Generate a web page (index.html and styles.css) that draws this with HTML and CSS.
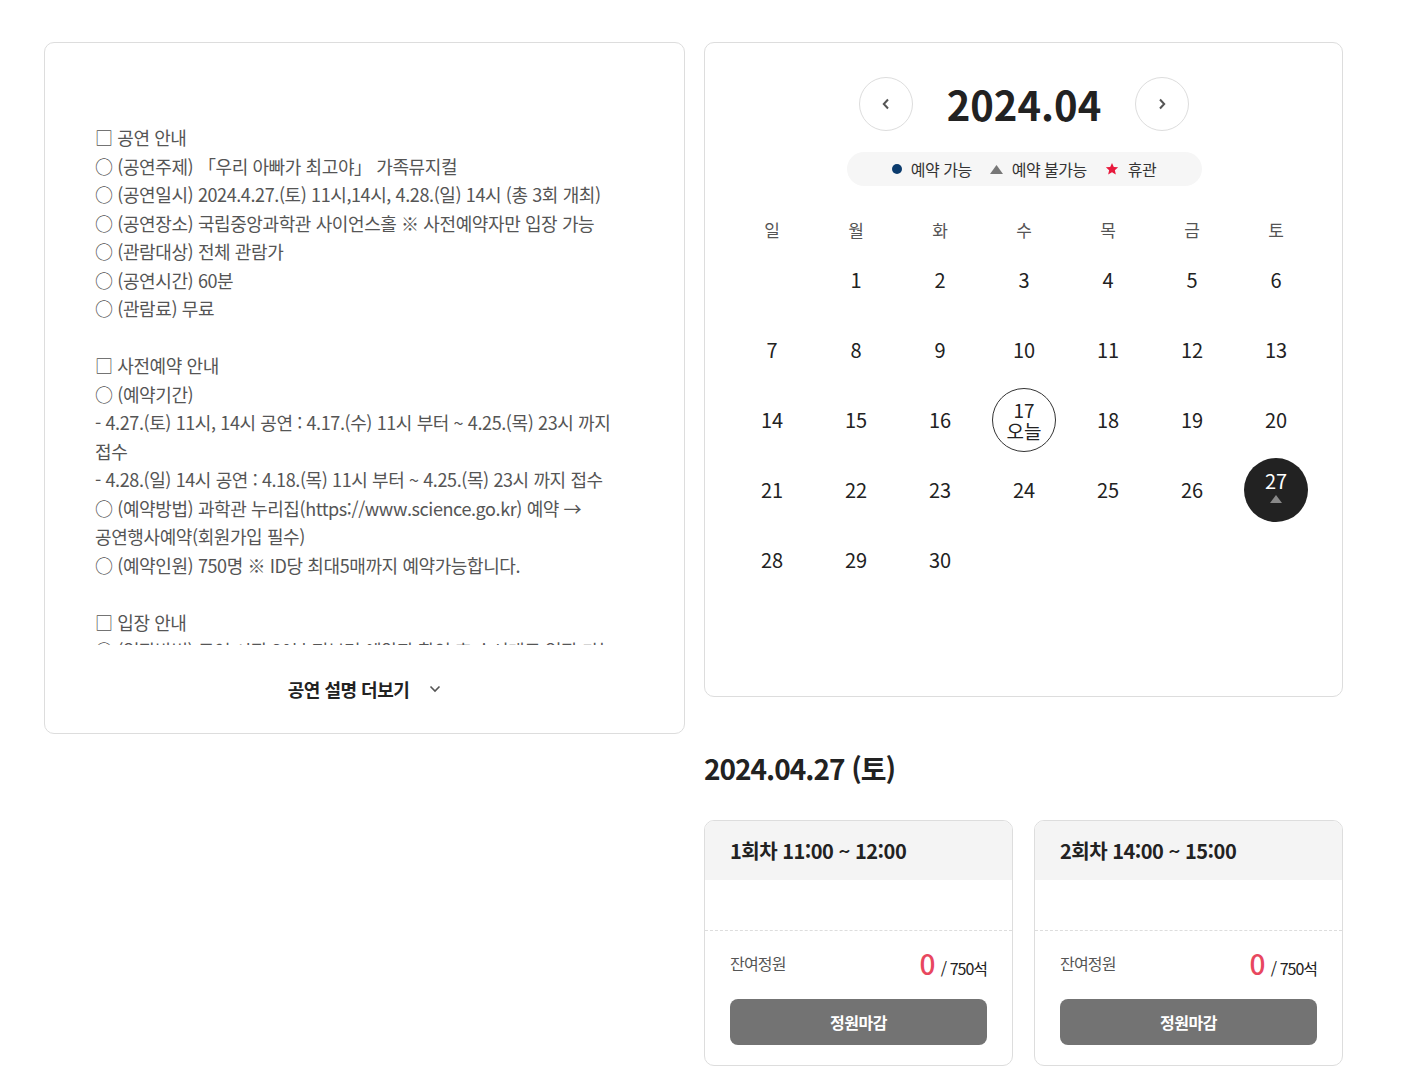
FILE: index.html
```html
<!DOCTYPE html>
<html lang="ko">
<head>
<meta charset="utf-8">
<title>공연 예약</title>
<link rel="stylesheet" href="styles.css">
</head>
<body>
<div class="page">
  <div class="left-col">
    <div class="info-card">
      <div class="desc">
        <p>□ 공연 안내<br>
        ○ (공연주제) 「우리 아빠가 최고야」 가족뮤지컬<br>
        ○ (공연일시) 2024.4.27.(토) 11시,14시, 4.28.(일) 14시 (총 3회 개최)<br>
        ○ (공연장소) 국립중앙과학관 사이언스홀 ※ 사전예약자만 입장 가능<br>
        ○ (관람대상) 전체 관람가<br>
        ○ (공연시간) 60분<br>
        ○ (관람료) 무료</p>
        <p>□ 사전예약 안내<br>
        ○ (예약기간)<br>
        - 4.27.(토) 11시, 14시 공연 : 4.17.(수) 11시 부터 ~ 4.25.(목) 23시 까지 접수<br>
        - 4.28.(일) 14시 공연 : 4.18.(목) 11시 부터 ~ 4.25.(목) 23시 까지 접수<br>
        ○ (예약방법) 과학관 누리집(https://www.science.go.kr) 예약 → 공연행사예약(회원가입 필수)<br>
        ○ (예약인원) 750명 ※ ID당 최대5매까지 예약가능합니다.</p>
        <p>□ 입장 안내<br>
        ○ (입장방법) 공연 시작 30분 전부터 예약자 확인 후 순서대로 입장 가능</p>
      </div>
      <button class="more-btn">공연 설명 더보기
        <svg width="12" height="8" viewBox="0 0 12 8"><path d="M1.5 1.5 6 6l4.5-4.5" fill="none" stroke="#555" stroke-width="1.6"/></svg>
      </button>
    </div>
  </div>

  <div class="right-col">
    <div class="cal-card">
      <div class="cal-head">
        <button class="nav-btn"><svg width="8" height="12" viewBox="0 0 8 12"><path d="M6 1.5 1.8 6 6 10.5" fill="none" stroke="#555" stroke-width="2"/></svg></button>
        <h2 class="cal-title">2024.04</h2>
        <button class="nav-btn"><svg width="8" height="12" viewBox="0 0 8 12"><path d="M2 1.5 6.2 6 2 10.5" fill="none" stroke="#555" stroke-width="2"/></svg></button>
      </div>
      <div class="legend">
        <span class="legend-item"><i class="dot"></i>예약 가능</span>
        <span class="legend-item"><svg width="13" height="9" viewBox="0 0 13 9"><path d="M6.5 0 13 9H0z" fill="#777"/></svg>예약 불가능</span>
        <span class="legend-item"><svg width="14" height="14" viewBox="0 0 24 24"><path d="M12 1.5l3.1 6.9 7.4.7-5.6 5 1.7 7.4L12 17.6l-6.6 3.9 1.7-7.4-5.6-5 7.4-.7z" fill="#e8193c"/></svg>휴관</span>
      </div>
      <div class="weekdays">
        <span>일</span><span>월</span><span>화</span><span>수</span><span>목</span><span>금</span><span>토</span>
      </div>
      <div class="days">
        <div class="day"></div>
        <div class="day"><span>1</span></div>
        <div class="day"><span>2</span></div>
        <div class="day"><span>3</span></div>
        <div class="day"><span>4</span></div>
        <div class="day"><span>5</span></div>
        <div class="day"><span>6</span></div>
        <div class="day"><span>7</span></div>
        <div class="day"><span>8</span></div>
        <div class="day"><span>9</span></div>
        <div class="day"><span>10</span></div>
        <div class="day"><span>11</span></div>
        <div class="day"><span>12</span></div>
        <div class="day"><span>13</span></div>
        <div class="day"><span>14</span></div>
        <div class="day"><span>15</span></div>
        <div class="day"><span>16</span></div>
        <div class="day"><span class="today">17<em>오늘</em></span></div>
        <div class="day"><span>18</span></div>
        <div class="day"><span>19</span></div>
        <div class="day"><span>20</span></div>
        <div class="day"><span>21</span></div>
        <div class="day"><span>22</span></div>
        <div class="day"><span>23</span></div>
        <div class="day"><span>24</span></div>
        <div class="day"><span>25</span></div>
        <div class="day"><span>26</span></div>
        <div class="day"><span class="selected">27<svg width="12" height="8" viewBox="0 0 12 8"><path d="M6 0l6 8H0z" fill="#888"/></svg></span></div>
        <div class="day"><span>28</span></div>
        <div class="day"><span>29</span></div>
        <div class="day"><span>30</span></div>
      </div>
    </div>

    <h3 class="date-title">2024.04.27 (토)</h3>

    <div class="sessions">
      <div class="session">
        <div class="session-head">1회차 11:00 ~ 12:00</div>
        <div class="session-body"></div>
        <div class="session-foot">
          <div class="seat-row">
            <span class="seat-label">잔여정원</span>
            <span class="seat-count"><b>0</b> / 750석</span>
          </div>
          <button class="closed-btn">정원마감</button>
        </div>
      </div>
      <div class="session">
        <div class="session-head">2회차 14:00 ~ 15:00</div>
        <div class="session-body"></div>
        <div class="session-foot">
          <div class="seat-row">
            <span class="seat-label">잔여정원</span>
            <span class="seat-count"><b>0</b> / 750석</span>
          </div>
          <button class="closed-btn">정원마감</button>
        </div>
      </div>
    </div>
  </div>
</div>
</body>
</html>
```

FILE: styles.css
```css
* {
  box-sizing: border-box;
}
body {
  margin: 0;
  background: #fff;
  color: #222;
  font-family: "Noto Sans CJK KR", "Noto Sans", sans-serif;
}
button {
  font-family: inherit;
  cursor: pointer;
}
.page {
  display: grid;
  grid-template-columns: 641px 639px;
  column-gap: 19px;
  align-items: start;
  padding: 42px 0 26px 44px;
}

/* 공연 설명 */
.info-card {
  border: 1px solid #ddd;
  border-radius: 10px;
  padding: 80px 50px 0;
}
.desc {
  height: 522px;
  overflow: hidden;
  font-size: 18px;
  line-height: 28.5px;
  letter-spacing: -0.4px;
  word-break: keep-all;
  color: #555;
}
.desc p {
  margin: 0 0 28.5px;
}
.more-btn {
  display: flex;
  align-items: center;
  justify-content: center;
  gap: 20px;
  width: 100%;
  height: 88px;
  border: none;
  background: none;
  font-size: 18px;
  font-weight: 700;
  color: #222;
  letter-spacing: -0.5px;
}

/* 달력 */
.cal-card {
  height: 655px;
  border: 1px solid #ddd;
  border-radius: 10px;
  padding: 34px 24px 0 25px;
}
.cal-head {
  display: flex;
  align-items: center;
  justify-content: center;
  gap: 34px;
}
.nav-btn {
  display: flex;
  align-items: center;
  justify-content: center;
  width: 54px;
  height: 54px;
  border: 1px solid #ddd;
  border-radius: 50%;
  background: #fff;
  padding: 0;
}
.cal-title {
  margin: 0;
  font-size: 40px;
  line-height: 54px;
  font-weight: 700;
  color: #222;
}
.legend {
  display: flex;
  align-items: center;
  justify-content: center;
  gap: 18px;
  width: 355px;
  height: 34px;
  margin: 21px auto 0;
  border-radius: 17px;
  background: #f6f6f6;
  font-size: 16px;
  color: #333;
  letter-spacing: -0.5px;
}
.legend-item {
  display: flex;
  align-items: center;
  gap: 9px;
}
.dot {
  width: 10px;
  height: 10px;
  border-radius: 50%;
  background: #0b3b6d;
}
.weekdays,
.days {
  display: grid;
  grid-template-columns: repeat(7, 84px);
}
.weekdays {
  margin-top: 29px;
  height: 30px;
  line-height: 30px;
  text-align: center;
  font-size: 17px;
  color: #555;
}
.day {
  display: flex;
  align-items: center;
  justify-content: center;
  height: 70px;
}
.day span {
  display: flex;
  flex-direction: column;
  align-items: center;
  justify-content: center;
  width: 64px;
  height: 64px;
  border-radius: 50%;
  font-size: 20px;
  line-height: 22px;
  color: #222;
}
.day .today {
  border: 1px solid #333;
  font-size: 19px;
  line-height: 21px;
}
.day .today em {
  font-style: normal;
}
.day .selected {
  background: #222;
  color: #fff;
  gap: 4px;
  line-height: 20px;
  padding-bottom: 6px;
}

/* 회차 */
.date-title {
  margin: 53px 0 0;
  font-size: 28px;
  line-height: 36px;
  font-weight: 700;
  letter-spacing: -1px;
  color: #222;
}
.sessions {
  display: grid;
  grid-template-columns: 309px 309px;
  column-gap: 21px;
  margin-top: 34px;
}
.session {
  border: 1px solid #ddd;
  border-radius: 10px;
  overflow: hidden;
}
.session-head {
  height: 59px;
  line-height: 59px;
  padding: 0 25px;
  background: #f4f4f4;
  font-size: 20px;
  font-weight: 700;
  letter-spacing: -0.5px;
  color: #222;
}
.session-body {
  height: 50px;
}
.session-foot {
  border-top: 1px dashed #ddd;
  padding: 17px 25px 20px;
}
.seat-row {
  display: flex;
  justify-content: space-between;
  align-items: center;
  height: 30px;
}
.seat-label {
  font-size: 16px;
  color: #555;
  letter-spacing: -0.8px;
}
.seat-count {
  font-size: 16px;
  color: #222;
  letter-spacing: -1px;
}
.seat-count b {
  font-size: 28px;
  font-weight: 500;
  color: #e8475f;
  margin-right: 3px;
}
.closed-btn {
  display: block;
  width: 100%;
  height: 46px;
  margin-top: 21px;
  border: none;
  border-radius: 8px;
  background: #737373;
  color: #fff;
  font-size: 16px;
  font-weight: 700;
  letter-spacing: -0.5px;
}
```
